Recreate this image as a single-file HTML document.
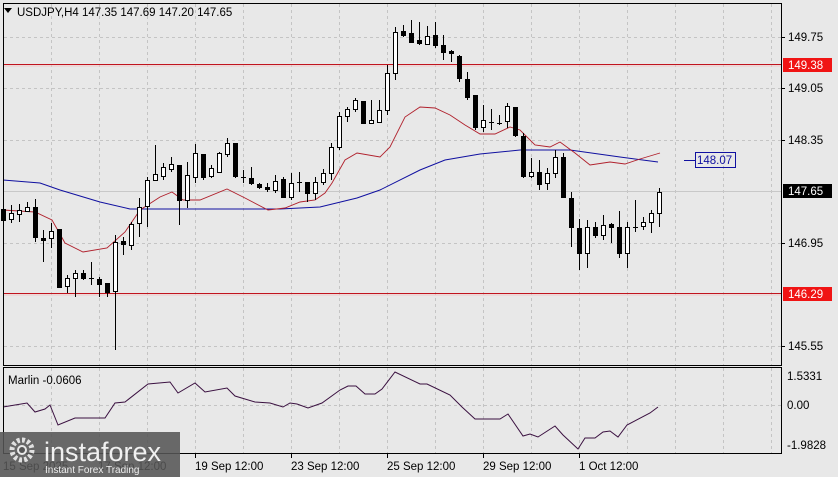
<!DOCTYPE html>
<html><head><meta charset="utf-8"><style>
html,body{margin:0;padding:0;background:#e8e8e8;width:838px;height:477px;overflow:hidden}
svg text{font-family:"Liberation Sans",sans-serif;font-size:11.5px}
</style></head><body>
<svg id="s" width="838" height="477" xmlns="http://www.w3.org/2000/svg">
<rect width="838" height="477" fill="#e8e8e8"/>
<g id="grid" stroke="#c4c4c4" stroke-dasharray="3,3" stroke-width="1"></g>
<line x1="3" y1="191.5" x2="781" y2="191.5" stroke="#c8c8c8"/>
<line x1="3" y1="64.5" x2="781" y2="64.5" stroke="#c0141e"/>
<line x1="3" y1="293.5" x2="781" y2="293.5" stroke="#c0141e"/>
<line x1="3" y1="66" x2="781" y2="66" stroke="#f0c8c8"/>
<line x1="3" y1="295" x2="781" y2="295" stroke="#f0c8c8"/>
<polyline fill="none" stroke="#1010a0" stroke-width="1" points="3,180 40,183 60,190 100,202 130,209 200,209 280,209 320,207 357,198 380,190 420,170 445,160 480,154 520,150 570,150 620,157 658,162"/>
<polyline fill="none" stroke="#b0202c" stroke-width="0.9" points="3,210 35,212 52,220 65,243 83,252 107,248 125,232 140,210 160,197 172,192 183,200 200,200 227,189 245,198 268,210 285,208 300,202 315,200 325,193 332,183 345,160 357,153 380,157 390,147 405,117 420,107 435,108 450,115 465,125 480,134 495,134 510,127 520,130 535,145 550,147 560,142 575,153 590,165 610,162 625,164 640,159 660,153"/>
<g id="candles"></g>
<polyline fill="none" stroke="#3a1040" stroke-width="1" points="3,407 27,403 35,412 45,409 50,405 58,425 75,418 105,418 115,403 125,402 148,384 170,382 178,393 195,383 205,392 227,388 235,396 255,402 270,403 283,407 290,403 297,404 308,408 322,403 340,390 348,386 356,386 365,394 375,394 382,389 395,372 420,384 427,384 450,395 462,407 475,419 500,419 508,414 523,436 530,434 538,437 555,426 563,435 578,449 585,438 595,438 603,432 610,431 618,437 627,425 650,413 658,407"/>
<rect x="3.5" y="3.5" width="778" height="362" fill="none" stroke="#000"/>
<rect x="3.5" y="367.5" width="778" height="86" fill="none" stroke="#000"/>
<path d="M4 8 L12 8 L8 13 Z" fill="#000"/>
<text x="17" y="16">USDJPY,H4  147.35 147.69 147.20 147.65</text>
<text x="8" y="384">Marlin -0.0606</text>
<g fill="#000">
<text x="788" y="41">149.75</text>
<text x="788" y="92">149.05</text>
<text x="788" y="144">148.35</text>
<text x="788" y="247">146.95</text>
<text x="788" y="350">145.55</text>
<text x="787" y="380">1.5331</text>
<text x="787" y="409">0.00</text>
<text x="787" y="449">-1.9828</text>
</g>
<g stroke="#000"><line x1="781" y1="37.5" x2="785" y2="37.5"/><line x1="781" y1="88.5" x2="785" y2="88.5"/><line x1="781" y1="140.5" x2="785" y2="140.5"/><line x1="781" y1="243.5" x2="785" y2="243.5"/><line x1="781" y1="346.5" x2="785" y2="346.5"/></g>
<rect x="783" y="58" width="49" height="14" fill="#f01414"/><text x="788" y="69" fill="#fff">149.38</text>
<rect x="783" y="287" width="49" height="14" fill="#f01414"/><text x="788" y="298" fill="#fff">146.29</text>
<rect x="783" y="184" width="49" height="14" fill="#000"/><text x="788" y="195" fill="#fff">147.65</text>
<line x1="684" y1="160.5" x2="695" y2="160.5" stroke="#1010a0"/>
<rect x="695.5" y="152.5" width="40" height="15" fill="none" stroke="#1010a0"/>
<text x="697" y="164" fill="#1010a0">148.07</text>
<g stroke="#000"><line x1="195.5" y1="453" x2="195.5" y2="458"/><line x1="291.5" y1="453" x2="291.5" y2="458"/><line x1="387.5" y1="453" x2="387.5" y2="458"/><line x1="483.5" y1="453" x2="483.5" y2="458"/><line x1="579.5" y1="453" x2="579.5" y2="458"/></g>
<text x="3" y="470">15 Sep 2025</text>
<text x="98" y="470">17 Sep 12:00</text>
<text x="195" y="470">19 Sep 12:00</text>
<text x="291" y="470">23 Sep 12:00</text>
<text x="387" y="470">25 Sep 12:00</text>
<text x="483" y="470">29 Sep 12:00</text>
<text x="579" y="470">1 Oct 12:00</text>
<rect x="0" y="432" width="180" height="45" fill="#555" fill-opacity="0.88"/>
<g fill="#e8e8e8">
<circle cx="22" cy="450" r="10" fill="none" stroke="#e0e0e0" stroke-width="5" stroke-dasharray="3,2.2"/>
<circle cx="22" cy="450" r="5"/>
<circle cx="22" cy="450" r="3" fill="#555"/>
</g>
<text x="44" y="461" fill="#f0f0f0" style="font-size:27px">instaforex</text>
<text x="45" y="473" fill="#eee" style="font-size:10px">Instant Forex Trading</text>
</svg>
<script>
var g=document.getElementById('grid'),h='';
for(var k=1;k<=16;k++){var x=3+48*k+0.5;if(x<781){h+='<line x1="'+x+'" y1="4" x2="'+x+'" y2="365"/><line x1="'+x+'" y1="368" x2="'+x+'" y2="453"/>';}}
[37,88,140,243,346,405].forEach(function(y){h+='<line x1="4" y1="'+(y+.5)+'" x2="781" y2="'+(y+.5)+'"/>';});
g.innerHTML=h;
var d=[[3,209,220,205,225,1],[11,213,219,205,223,0],[19,210,214,204,222,0],[27,207,211,202,212,0],[35,207,237,199,242,1],[43,238,240,230,262,1],[51,231,238,223,248,0],[59,229,287,229,288,1],[67,278,286,275,293,0],[75,273,278,270,297,0],[83,273,278,270,280,1],[91,278,279,262,285,2],[99,279,284,277,297,1],[107,283,292,283,297,1],[115,242,291,235,350,0],[123,241,244,237,255,1],[131,224,245,222,250,0],[139,207,223,198,237,0],[147,180,206,177,227,0],[155,174,180,145,180,0],[163,167,176,163,180,0],[171,164,169,157,172,0],[179,165,200,165,225,1],[187,175,200,162,208,0],[195,153,177,144,183,0],[203,154,177,154,180,1],[211,168,176,165,178,0],[219,153,172,152,173,0],[227,143,154,138,157,0],[235,143,176,143,178,1],[243,177,178,170,183,2],[251,178,183,167,185,1],[259,184,187,183,189,1],[267,187,189,183,192,1],[275,181,190,175,193,0],[283,179,197,177,198,1],[291,183,197,173,200,0],[299,182,183,172,192,2],[307,182,193,182,202,1],[315,182,193,177,200,0],[323,173,182,169,185,0],[331,147,173,143,180,0],[339,116,147,112,150,0],[347,109,116,107,122,0],[355,100,109,98,112,0],[363,101,123,101,123,1],[371,120,123,100,123,0],[379,110,122,100,123,0],[387,73,110,65,115,0],[395,32,73,27,80,0],[403,31,35,25,37,1],[411,33,42,20,43,1],[419,40,43,22,45,1],[427,36,44,26,45,0],[435,35,45,22,48,1],[443,45,52,35,60,1],[451,51,53,50,62,1],[459,56,78,55,82,1],[467,79,97,72,100,1],[475,95,127,95,130,1],[483,120,127,105,132,0],[491,122,123,109,130,2],[499,123,124,115,125,2],[507,106,121,103,128,0],[515,107,135,107,137,1],[523,136,176,133,178,1],[531,172,176,158,178,0],[539,172,184,160,190,1],[547,173,183,168,190,0],[555,157,173,150,178,0],[563,157,197,153,198,1],[571,198,227,192,247,1],[579,228,253,219,270,1],[587,227,253,220,268,0],[595,227,235,222,238,1],[603,225,235,215,240,0],[611,224,227,223,243,1],[619,227,253,211,258,1],[627,227,253,222,268,0],[635,227,228,200,232,2],[643,222,226,217,230,0],[651,213,222,210,233,0],[659,192,213,188,227,0]];
var c='';
d.forEach(function(a){var x=a[0]+0.5;c+='<line x1="'+x+'" y1="'+a[3]+'" x2="'+x+'" y2="'+a[4]+'" stroke="#000"/>';
if(a[5]==2){c+='<line x1="'+(a[0]-2)+'" y1="'+(a[1]+.5)+'" x2="'+(a[0]+3)+'" y2="'+(a[1]+.5)+'" stroke="#000"/>';}
else c+='<rect x="'+(a[0]-1.5)+'" y="'+(a[1]+.5)+'" width="4" height="'+Math.max(1,a[2]-a[1])+'" fill="'+(a[5]?'#000':'#fff')+'" stroke="#000"/>';});
document.getElementById('candles').innerHTML=c;
</script>
</body></html>
